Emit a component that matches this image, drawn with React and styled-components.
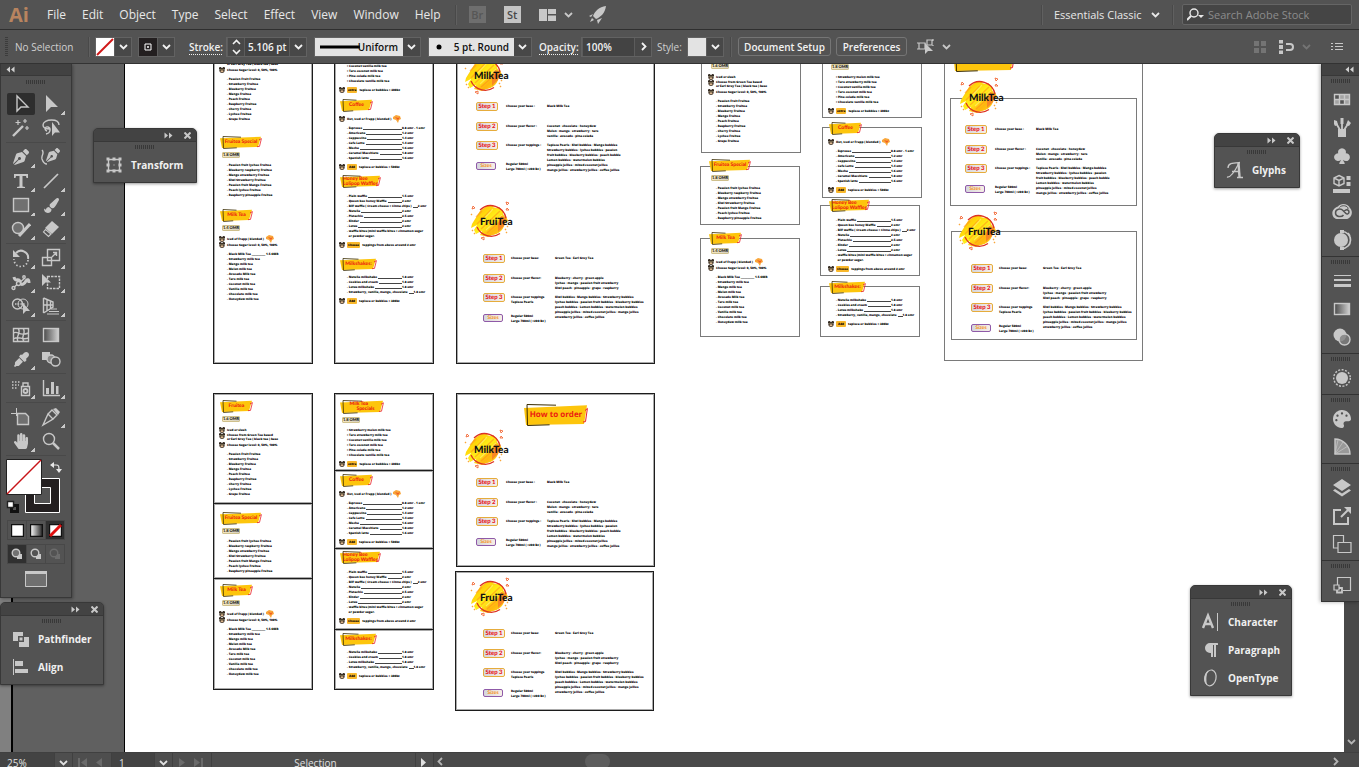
import React from "react";
import styled, { createGlobalStyle } from "styled-components";
import { FaHandPaper, FaPalette, FaPenNib, FaEyeDropper, FaPaintBrush, FaParagraph } from "react-icons/fa";
import { BsSuitClubFill } from "react-icons/bs";

const GlobalStyle = createGlobalStyle`
    * {
        box-sizing: border-box;
    }
    body {
        margin: 0;
        background: #535353;
        color: #e8e8e8;
        font-family: "Open Sans", "Noto Sans", sans-serif;
        font-size: 12px;
    }
    button, input, select {
        font: inherit;
        color: inherit;
        margin: 0;
        padding: 0;
        border: none;
        background: none;
        outline: none;
    }
    select {
        appearance: none;
    }
`;

/* ---------- shell ---------- */

const Shell = styled.div`
    height: 100vh;
    display: grid;
    grid-template-rows: 30px 34px minmax(0, 1fr) 15px;
    overflow: hidden;
`;

const MenuBar = styled.header`
    display: flex;
    align-items: center;
    border-bottom: 1px solid #2f2f2f;
    padding: 0 7px 0 9px;
`;

const AppMark = styled.div`
    width: 30px;
    font-size: 20px;
    line-height: 24px;
    font-weight: 700;
    color: #b8845f;
`;

const Menus = styled.nav`
    display: flex;
    gap: 16px;
    padding: 0 14px 0 8px;
`;

const MenuItem = styled.button`
    line-height: 20px;
`;

const Divider = styled.div`
    width: 2px;
    height: 20px;
    background: #494949;
    border-right: 1px solid #606060;
`;

const MenuTools = styled.div`
    display: flex;
    align-items: center;
    gap: 16px;
    padding-left: 12px;
    margin-right: auto;
`;

const AppTile = styled.button`
    width: 17px;
    height: 17px;
    line-height: 17px;
    font-size: 11px;
    font-weight: 600;
    text-align: center;
    background: ${props => props.$dim ? "#6e6e6e" : "#c4c4c4"};
    color: ${props => props.$dim ? "#565656" : "#4a4a4a"};
    margin-right: 2px;
`;

const ToolButton = styled.button`
    display: flex;
    align-items: center;
    gap: 8px;
    margin-right: ${props => props.$end || 0}px;
    color: #c8c8c8;
`;

const Workspace = styled.label`
    display: grid;
    align-items: center;
    width: 106px;
    margin: 0 12px 0 11px;
    font-size: 11px;

    select {
        grid-area: 1 / 1;
        width: 100%;
    }
    svg {
        grid-area: 1 / 1;
        justify-self: end;
        pointer-events: none;
    }
`;

const SearchBox = styled.label`
    display: flex;
    align-items: center;
    gap: 4px;
    width: 170px;
    height: 21px;
    margin-left: 8px;
    padding-left: 4px;
    border: 1px solid #656565;
    border-radius: 2px;
    background: #454545;
    font-size: 11px;

    input {
        width: 130px;
    }
    input::placeholder {
        color: #8c8c8c;
        opacity: 1;
    }
`;

const ControlBar = styled.div`
    display: flex;
    align-items: center;
    border-bottom: 1px solid #333;
    padding: 0 16px 0 5px;
    font-size: 10px;
    font-weight: 600;
`;

const SideGrip = styled.div`
    width: 3px;
    height: 19px;
    background: repeating-linear-gradient(#3c3c3c 0 1px, #535353 1px 2px);
`;

const Caption = styled.span`
    width: ${props => props.$w}px;
    white-space: nowrap;
    font-weight: ${props => props.$bright ? 600 : 400};
    color: ${props => props.$bright ? "#f0f0f0" : "#d0d0d0"};

    u {
        text-decoration: underline dotted;
        text-underline-offset: 3px;
    }
`;

const Field = styled.div`
    display: flex;
    align-items: center;
    height: 20px;
    margin-right: ${props => props.$gap || 7}px;
    border: 1px solid #626262;
    background: #484848;
    color: #f2f2f2;
`;

const Swatch = styled.button`
    display: block;
    width: 18px;
    height: 18px;
    background: ${props => props.$fill};

    svg {
        display: block;
    }
`;

const ChevronButton = styled.button`
    display: flex;
    justify-content: center;
    align-items: center;
    width: 17px;
    height: 18px;
    border-left: 1px solid #5c5c5c;
`;

const NumberInput = styled.input`
    width: ${props => props.$w}px;
    height: 18px;
    padding-left: 3px;
    border-left: 1px solid #5c5c5c;
    background: #434343;
`;

const Profile = styled.label`
    display: grid;
    align-items: center;
    width: ${props => props.$w}px;
    height: 20px;
    margin-right: 7px;
    border: 1px solid #626262;
    background: linear-gradient(90deg, #e3e3e3 calc(100% - 17px), #484848 0);
    color: #111;

    > * {
        grid-area: 1 / 1;
    }
    select {
        width: 100%;
        padding-right: 22px;
        text-align: right;
        text-align-last: right;
    }
    svg {
        pointer-events: none;
    }
    svg:last-child {
        justify-self: end;
        margin-right: 4px;
        color: #f2f2f2;
    }
`;

const BarButton = styled.button`
    height: 19px;
    width: ${props => props.$w}px;
    margin-right: 5px;
    border: 1px solid #757575;
    border-radius: 3px;
    color: #f2f2f2;
    white-space: nowrap;
`;

const BarRight = styled.div`
    display: flex;
    align-items: center;
    margin-left: auto;
    gap: 12px;
    color: #c8c8c8;
`;

/* docks share the canvas cell and sit on top of it */
const Stage = styled.main`
    display: grid;
    position: relative;
    grid-template: minmax(0, 1fr) / minmax(0, 1fr);
    overflow: hidden;
    > * {
        grid-area: 1 / 1;
    }
`;

const Canvas = styled.div`
    position: relative;
    overflow: hidden;
    background: linear-gradient(90deg, #808080 11px, #000 11px 13px, #606060 13px 124px, #000 124px 125px, #fff 125px);
    text-rendering: geometricPrecision;
    color: #000;
`;

const ScrollTrack = styled.div`
    justify-self: end;
    display: flex;
    align-items: flex-end;
    justify-content: center;
    width: 15px;
    padding-bottom: 6px;
    background: #484848;
    color: #b4b4b4;
    z-index: 1;
`;

const StatusBar = styled.footer`
    display: flex;
    align-items: flex-start;
    height: 15px;
    overflow: hidden;
    background: #4a4a4a;
    border-top: 1px solid #404040;
    font-size: 10px;
    color: #e0e0e0;
`;

const StatusCell = styled.div`
    display: flex;
    flex: none;
    align-items: center;
    justify-content: ${props => props.$center ? "center" : "flex-start"};
    gap: 8px;
    width: ${props => props.$w}px;
    height: 19px;
    padding-left: 4px;
    border-right: 1px solid #404040;
    color: ${props => props.$dim ? "#6a6a6a" : "#e0e0e0"};
    background: ${props => props.$sunk ? "#434343" : "#4e4e4e"};

    input {
        width: 100%;
        padding-left: 3px;
    }
`;

const HScroll = styled.div`
    flex: 1;
    display: flex;
    align-items: center;
    justify-content: space-between;
    height: 17px;
    padding: 0 19px 0 2px;
    color: #b4b4b4;
`;

const Thumb = styled.div`
    width: 25px;
    height: 15px;
    border-radius: 8px;
    background: #5d5d5d;
    margin-right: auto;
    margin-left: 140px;
`;

/* ---------- tool dock ---------- */

const ToolDock = styled.aside`
    align-self: start;
    justify-self: start;
    width: 72px;
    padding-bottom: 8px;
    border: solid #383838;
    border-width: 0 1px 1px 1px;
    background: #535353;
    box-shadow: 1px 1px 3px #0005;
    z-index: 1;
`;

const DockHead = styled.div`
    display: flex;
    align-items: center;
    justify-content: ${props => props.$end ? "flex-end" : "flex-start"};
    height: 12px;
    padding: 0 5px;
    border-bottom: 1px solid #383838;
    background: #424242;
    color: #d0d0d0;
`;

const Grip = styled.div`
    width: 20px;
    height: 4px;
    margin: ${props => props.$pad || "3px auto"};
    background: repeating-linear-gradient(90deg, #383838 0 1px, #535353 1px 2px);
`;

const ToolGroup = styled.div`
    display: grid;
    grid-template-columns: 30px 30px;
    grid-auto-rows: 24px;
    margin: 0 5px;
    padding: 2px 0;
    border-bottom: 1px solid #494949;
`;

const Tool = styled.button`
    display: flex;
    justify-content: center;
    align-items: center;
    position: relative;
    width: 28px;
    height: 22px;
    margin: 1px;
    border-radius: 2px;
    color: #c8c8c8;
    background: ${props => props.$active ? "#2e2e2e" : "none"};

    &::after {
        content: "";
        display: ${props => props.$more ? "block" : "none"};
        position: absolute;
        right: 0;
        bottom: 0;
        width: 4px;
        height: 4px;
        background: linear-gradient(135deg, transparent 50%, #c8c8c8 50%);
    }
`;

const ModeRow = styled.div`
    display: flex;
    width: 58px;
    height: 20px;
    margin: ${props => props.$top}px 0 0 6px;
    border: ${props => props.$bare ? "none" : "1px solid #484848"};
`;

const Mode = styled.button`
    flex: 1;
    display: flex;
    justify-content: center;
    align-items: center;
    border-right: 1px solid #484848;
    background: ${props => props.$active ? "#303030" : "none"};
    color: ${props => props.$dim ? "#6c6c6c" : "#c8c8c8"};

    &:last-child {
        border-right: none;
    }
`;

const PaintBox = styled.div`
    margin: 3px 0 0 5px;
    height: 56px;
`;

/* ---------- panel dock and floating panels ---------- */

const PanelDock = styled.aside`
    align-self: start;
    justify-self: end;
    width: 38px;
    border-left: 1px solid #333;
    background: #535353;
    box-shadow: -1px 0 4px #0005;
    z-index: 2;
`;

const PanelGroup = styled.div`
    display: flex;
    flex-direction: column;
    padding: 0 0 2px;
    border-bottom: 1px solid #333;
`;

const PanelIcon = styled.button`
    display: flex;
    align-items: center;
    justify-content: center;
    height: 28px;
    padding-left: 2px;
    color: #c8c8c8;
`;

const Floating = styled.section`
    position: absolute;
    top: ${props => props.$top}px;
    ${props => props.$left !== undefined ? `left: ${props.$left}px` : `right: ${props.$right}px`};
    width: ${props => props.$w}px;
    padding-bottom: 3px;
    border: 1px solid #383838;
    border-radius: 5px 5px 0 0;
    background: #535353;
    box-shadow: 0 1px 3px #0006;
    overflow: hidden;
    z-index: 3;
`;

const FloatHead = styled.div`
    display: flex;
    justify-content: flex-end;
    align-items: center;
    gap: 11px;
    height: 13px;
    padding-right: 5px;
    border-bottom: 1px solid #383838;
    background: #434343;
    color: #d0d0d0;
`;

const FloatButton = styled.button`
    display: flex;
    color: #c8c8c8;
`;

const FloatRow = styled.button`
    display: flex;
    align-items: center;
    width: 100%;
    height: 28px;
    padding-left: 10px;
    gap: 7px;
    font-size: 10px;
    font-weight: 700;
    color: #f0f0f0;

    svg {
        color: #c8c8c8;
    }
`;

/* ---------- artwork ---------- */

const Frame = styled.div`
    position: absolute;
    left: ${props => props.$x}px;
    top: ${props => props.$y}px;
    width: ${props => props.$w}px;
    height: ${props => props.$h}px;
    border: 1px solid ${props => props.$thin ? "#7a7a7a" : "#1c1c1c"};
    box-shadow: ${props => props.$thin ? "none" : "inset 0 0 0 1px #0005"};
`;

const Placed = styled.div`
    position: absolute;
    left: ${props => props.$x}px;
    top: ${props => props.$y}px;
    font-size: 3px;
    font-weight: 800;
    line-height: 5px;
    white-space: nowrap;
`;

const BadgeBox = styled.h3`
    display: grid;
    place-items: center;
    width: ${props => props.$w}px;
    margin: 0 0 0 1px;
    font-family: ${props => props.$size ? "Open Sans" : "Lato"}, sans-serif;
    font-size: ${props => props.$size || 5}px;
    line-height: ${props => props.$size || 5}px;
    font-weight: ${props => props.$size ? 700 : 900};
    color: #ec1c10;

    svg, span {
        grid-area: 1 / 1;
    }
    span {
        white-space: pre;
    }
`;

const Price = styled.div`
    width: 18px;
    height: 6px;
    margin: 3px 0 5px 3px;
    border: 1px solid #cfc08c;
    border-radius: 1px;
    background: linear-gradient(90deg, #f6e8bd, #d3cfc4);
    font-family: Lato, sans-serif;
    font-size: 4px;
    font-weight: 700;
    line-height: 4px;
    text-align: center;
`;

const NoteLine = styled.div`
    display: flex;
    align-items: ${props => props.$top ? "flex-start" : "center"};
    gap: 2px;
    height: ${props => props.$top ? 9 : 6}px;
    line-height: ${props => props.$top ? 4 : 6}px;

    svg {
        flex: none;
    }
`;

const Notes = styled.div`
    margin-bottom: 4px;
`;

const ExtraTag = styled.span`
    padding: 0 1px;
    min-width: 10px;
    height: 6px;
    border-radius: 1px;
    background: #f9b82b;
    text-align: center;
`;

const Items = styled.ul`
    list-style: none;
    margin: 0 0 3px;
    padding: 0 0 0 8px;

    li {
        height: 5px;
    }
`;

const PriceRow = styled.li`
    display: flex;

    span:first-child {
        display: flex;
        flex: none;
        min-width: 55px;
        gap: 1px;
    }
    i {
        flex: 1;
        min-width: 5px;
        height: 4px;
        border-bottom: 1px solid #444;
    }
`;

const Gap = styled.div`
    height: ${props => props.$h || 0}px;
    width: ${props => props.$w || 0}px;
`;

const Guide = styled.div`
    display: grid;
    grid-template-columns: ${props => props.$cols};
    grid-template-rows: 20px 19px 21px 10px;
`;

const StepTag = styled.div`
    width: ${props => props.$sizes ? 20 : 22}px;
    height: ${props => props.$sizes ? 8 : 9}px;
    border: 1px solid ${props => props.$sizes ? "#8f5aa8" : "#e6ac3c"};
    border-radius: 2px;
    background: linear-gradient(90deg, #d5d5dc, #f6efe6);
    font-family: Lato, sans-serif;
    font-size: ${props => props.$sizes ? 5 : 6}px;
    line-height: ${props => props.$sizes ? 6 : 7}px;
    text-align: center;
    font-weight: 900;
    color: ${props => props.$sizes ? "#f7941d" : "#e8141c"};
`;

const StepText = styled.div`
    white-space: pre;
    padding-top: ${props => props.$high ? 0 : 2}px;
    height: 0;
`;

/* ---------- small drawings ---------- */

const Svg = ({ w = 20, h = w, box, children, ...rest }) => (
    <svg width={w} height={h} viewBox={box || `0 0 ${w} ${h}`} fill="none" stroke="currentColor" strokeWidth="1.4" aria-hidden="true" {...rest}>
        {children}
    </svg>
);

const Chevron = ({ right, left }) => (
    <Svg w={9} h={9} strokeWidth="1.8">
        <path d={right ? "M3 1l3.500 3.500L3 8" : left ? "M6 1L2.500 4.500L6 8" : "M1 3l3.500 3.500L8 3"} />
    </Svg>
);

const DoubleArrow = ({ back }) => (
    <Svg w={9} h={7} fill="currentColor" stroke="none">
        <path d={back ? "M4 .5v6L.5 3.500zM8.500 .5v6L5 3.500z" : "M.5 .5v6L4 3.500zM5 .5v6L8.500 3.500z"} />
    </Svg>
);

const Bear = () => (
    <Svg w={6} h={6} stroke="none">
        <circle cx="1.200" cy="1.300" r="1.200" fill="#2b2118" />
        <circle cx="4.800" cy="1.300" r="1.200" fill="#2b2118" />
        <circle cx="3" cy="3.300" r="2.600" fill="#40342a" />
        <ellipse cx="3" cy="4.300" rx="1.500" ry="1" fill="#d8b48c" />
        <path d="M1.500 2.500h1M3.500 2.500h1" stroke="#e8e0a0" strokeWidth=".6" />
    </Svg>
);

const Splash = () => (
    <Svg w={8} h={8} stroke="none">
        <path d="M0 2L3 0l4 1 1 3-2 1-1 3-2-3-3-1z" fill="#f9a63a" />
        <path d="M2 2l3 1 2-1-2 3z" fill="#f15a24" />
    </Svg>
);

const Badge = ({ w, h = 13, size, children }) => (
    <BadgeBox $w={w} $size={size}>
        <Svg w={w} h={h} strokeWidth={h > 14 ? 1 : 0.8}>
            <path d={`M0 ${h * 0.18}L${w - 1} ${h * 0.06}L${w - 4} ${h - 2}L2 ${h - 1}z`} fill="#fdc50c" stroke="none" />
            <path d={`M${w * 0.5} 1.200L3 .5L3.500 ${h - 0.5}L${w * 0.4} ${h - 1.200}`} stroke="#3a2c00" />
            <path d={`M${w - 3} ${h * 0.3}L${w - 0.6} ${h * 0.2}L${w - 2.500} ${h * 0.8}L${w - 5} ${h * 0.82}`} stroke="#e8202a" />
        </Svg>
        <span>{children}</span>
    </BadgeBox>
);

const Logo = ({ name }) => (
    <Svg w={50} h={44} stroke="none">
        <defs>
            <linearGradient id={`juice-${name}`} x1="0" y1="0" x2="1" y2="1">
                <stop offset="0" stopColor="#ffa21a" />
                <stop offset=".3" stopColor="#ffd60a" />
                <stop offset=".5" stopColor="#fff01a" />
                <stop offset=".7" stopColor="#ffb60f" />
                <stop offset="1" stopColor="#ffe01a" />
            </linearGradient>
        </defs>
        <circle cx="22" cy="22" r="14" fill={`url(#juice-${name})`} />
        <path d="M3 25L11 12l8-6 6 1-8 8 13-7 5 5-7 7 9-3 2 5-8 6-3 6-9 4-8-2 3-5-7 4-2-4 3-5-6 3z" fill={`url(#juice-${name})`} />
        <path d="M8 25L22 11M12 30L31 12M18 34L35 19M7 18l6-6" stroke="#ff8c1a" strokeWidth="1.500" opacity=".55" />
        <path d="M12 23L24 10M17 31L33 16" stroke="#fff36b" strokeWidth="1.200" opacity=".7" />
        <path d="M32 17l5 2-2 8-6 6 0-8z" fill="#f7762a" opacity=".75" />
        <path d="M11 11a15.500 15.500 0 0 1 26 8M8 28a15.500 15.500 0 0 0 23 6.500" stroke="#dd3324" strokeWidth="1.300" />
        <path d="M37 3l3 1-2 2zM4 7l2 2-3 1zM12 39l3-1 0 3zM38 9l2 2-3 0z" stroke="#f15a24" strokeWidth=".8" />
        <path d="M36 30l1 1M38 27l1 1M37 33l1 1M3 31l1 1M5 34l1 1M2 15l1 1" stroke="#f9a63a" />
        <text x="11" y="26" fontFamily="Lato, sans-serif" fontSize="10" fontWeight="900" fill="#111">{name}</text>
    </Svg>
);

/* ---------- menu artwork ---------- */

const Bullets = ({ items, mark = "." }) => (
    <Items>
        {items.map(item => <li key={item}>{mark} {item}</li>)}
    </Items>
);

const Priced = ({ rows, children }) => (
    <Items>
        {rows.map(([name, price]) => (
            <PriceRow key={name}><span>. {name}<i /></span><span>{price}</span></PriceRow>
        ))}
        {children}
    </Items>
);

const Note = ({ children, top }) => (
    <NoteLine $top={top}><Bear />{children}</NoteLine>
);

const FruiteaSection = ({ x, y }) => (
    <Placed $x={x} $y={y}>
        <Badge w={33}>Fruitea</Badge>
        <Price>1.6 OMR</Price>
        <Notes>
            <Note>Iced or slush</Note>
            <Note top><span>Choose from Green Tea based<br />or Earl Grey Tea ( black tea ) base</span></Note>
            <Note>Choose Sugar level: 0, 50%, 100%</Note>
        </Notes>
        <Bullets items={["Passion Fruit Fruitea", "Strawberry Fruitea", "Blueberry Fruitea", "Mango Fruitea", "Peach Fruitea", "Raspberry Fruitea", "Cherry Fruitea", "Lychee Fruitea", "Grape Fruitea"]} />
    </Placed>
);

const SpecialSection = ({ x, y }) => (
    <Placed $x={x} $y={y}>
        <Badge w={42}>Fruitea Special</Badge>
        <Price>1.8 OMR</Price>
        <Bullets items={["Passion fruit lychee Fruitea", "Blueberry raspberry Fruitea", "Mango strawberry Fruitea", "Kiwi Strawberry Fruitea", "Passion fruit Mango Fruitea", "Peach lychee Fruitea", "Raspberry pineapple Fruitea"]} />
    </Placed>
);

const MilkTeaSection = ({ x, y }) => (
    <Placed $x={x} $y={y}>
        <Badge w={33}>Milk Tea</Badge>
        <Price>1.4 OMR</Price>
        <Notes>
            <Note>Iced of Frapp ( blended )<Splash /></Note>
            <Note>Choose Sugar level: 0, 50%, 100%</Note>
        </Notes>
        <Bullets items={["Black Milk Tea _________ 1.5 OMR", "Strawberry milk tea", "Mango milk tea", "Melon milk tea", "Avocado Milk tea", "Taro milk tea", "Coconut milk tea", "Vanilla milk tea", "Chocolate milk tea", "Honeydew milk tea"]} />
    </Placed>
);

const SpecialsSection = ({ x, y }) => (
    <Placed $x={x} $y={y}>
        <Badge w={44} h={14}>{"Milk Tea\n      Specials"}</Badge>
        <Price>1.8 OMR</Price>
        <Bullets mark="•" items={["Strawberry melon milk tea", "Taro strawberry milk tea", "Coconut vanilla milk tea", "Taro coconut milk tea", "Pina colada milk tea", "Chocolate vanilla milk tea"]} />
        <Note><ExtraTag>extra</ExtraTag>tapioca or bubbles + 300bz</Note>
    </Placed>
);

const CoffeeSection = ({ x, y }) => (
    <Placed $x={x} $y={y}>
        <Badge w={33}>Coffee</Badge>
        <Gap $h={4} />
        <Notes>
            <Note>Hot, Iced or Frapp ( blended )<Splash /></Note>
        </Notes>
        <Priced rows={[["Espresso", "0.8 omr - 1 omr"], ["Americano", "1.2 omr"], ["Cappuccino", "1.4 omr"], ["Cafe Latte", "1.4 omr"], ["Mocha", "1.6 omr"], ["Caramel Macchiato", "1.8 omr"], ["Spanish latte", "1.6 omr"]]} />
        <Note><ExtraTag>Add</ExtraTag>tapioca or bubbles + 500bz</Note>
    </Placed>
);

const WaffleSection = ({ x, y }) => (
    <Placed $x={x} $y={y}>
        <Badge w={41}>{"Honey Bee\nLolipop Waffles"}</Badge>
        <Gap $h={6} />
        <Priced rows={[["Plain waffle", "1.5 omr"], ["Queen bee honey Waffle", "2 omr"], ["Bilf waffle ( Cream cheese + Cinna chips )", "2 omr"], ["Nutella", "2 omr"], ["Pistachio", "2.5 omr"], ["Kinder", "2 omr"], ["Lotus", "2 omr"]]}>
            <li>. waffle bites (mini waffle bites + cinnamon sugar</li>
            <li>&nbsp;&nbsp;or powder sugar.</li>
        </Priced>
        <Note><ExtraTag>Choose</ExtraTag>toppings from above around 2 omr</Note>
    </Placed>
);

const ShakeSection = ({ x, y }) => (
    <Placed $x={x} $y={y}>
        <Badge w={37}>Milkshakes:</Badge>
        <Gap $h={4} />
        <Priced rows={[["Nutella milkshake", "1.8 omr"], ["Cookies and cream", "1.8 omr"], ["Lotus milkshake", "1.8 omr"], ["Strawberry, vanilla, mango, chocolate", "1.8 omr"]]} />
        <Note><ExtraTag>Add</ExtraTag>tapioca or bubbles + 300bz</Note>
    </Placed>
);

const MILK_STEPS = [
    ["Step 1", "Choose your base :", "Black Milk Tea"],
    ["Step 2", "Choose your flavor :", "Coconut · chocolate · honeydew\nMelon · mango · strawberry · taro\nvanilla · avocado · pina colada"],
    ["Step 3", "Choose your toppings :", "Tapioca Pearls · Kiwi bubbles · Mango bubbles\nStrawberry bubbles · lychee bubbles · passion\nfruit bubbles · blueberry bubbles · peach bubble\nLemon bubbles · watermelon bubbles\npineapple jellies · mixed coconut jellies\nmango jellies · strawberry jellies · coffee jellies"],
];

const FRUIT_STEPS = [
    ["Step 1", "Choose your base:", "Green Tea · Earl Grey Tea"],
    ["Step 2", "Choose your flavor:", "Blueberry · cherry · green apple\nlychee · mango · passion fruit strawberry\nKiwi peach · pineapple · grape · raspberry"],
    ["Step 3", "Choose your toppings\nTapioca Pearls", "Kiwi bubbles · Mango bubbles · Strawberry bubbles\nlychee bubbles · passion fruit bubbles · blueberry bubbles\npeach bubbles · Lemon bubbles · watermelon bubbles\npineapple jellies · mixed coconut jellies · mango jellies\nstrawberry jellies · coffee jellies"],
];

const OrderGuide = ({ x, y, fruit }) => (
    <Placed $x={x} $y={y}>
        <Guide $cols={fruit ? "28px 44px auto" : "30px 41px auto"}>
            {(fruit ? FRUIT_STEPS : MILK_STEPS).map(([step, label, value]) => (
                <React.Fragment key={step}>
                    <StepTag>{step}</StepTag>
                    <StepText>{label}</StepText>
                    <StepText>{value}</StepText>
                </React.Fragment>
            ))}
            <StepTag $sizes>Sizes</StepTag>
            <StepText $high>{"Regular 500ml\nLarge 700ml ( +200 Bz )"}</StepText>
        </Guide>
    </Placed>
);

const Artwork = () => (
    <>
        <Frame $x={213} $y={-20} $w={100} $h={320} />
        <FruiteaSection x={219} y={-39} />
        <SpecialSection x={219} y={72} />
        <MilkTeaSection x={219} y={145} />

        <Frame $x={334} $y={-20} $w={100} $h={320} />
        <SpecialsSection x={339} y={-38} />
        <CoffeeSection x={339} y={35} />
        <WaffleSection x={339} y={111} />
        <ShakeSection x={339} y={194} />

        <Frame $x={456} $y={-20} $w={199} $h={320} />
        <Placed $x={463} $y={-11}><Logo name="MilkTea" /></Placed>
        <OrderGuide x={476} y={38} />
        <Placed $x={469} $y={135}><Logo name="FruiTea" /></Placed>
        <OrderGuide x={483} y={190} fruit />

        <Frame $thin $x={701} $y={-20} $w={100} $h={109} />
        <FruiteaSection x={708} y={-17} />
        <Frame $thin $x={700} $y={102} $w={100} $h={59} />
        <SpecialSection x={708} y={95} />
        <Frame $thin $x={700} $y={174} $w={100} $h={99} />
        <MilkTeaSection x={708} y={168} />

        <Frame $thin $x={822} $y={-20} $w={100} $h={74} />
        <SpecialsSection x={828} y={-17} />
        <Frame $thin $x={822} $y={63} $w={100} $h={71} />
        <CoffeeSection x={828} y={58} />
        <Frame $thin $x={820} $y={141} $w={100} $h={71} />
        <WaffleSection x={828} y={135} />
        <Frame $thin $x={820} $y={222} $w={100} $h={51} />
        <ShakeSection x={828} y={217} />

        <Frame $thin $x={944} $y={-20} $w={199} $h={317} />
        <Placed $x={952} $y={-14}><Badge w={62} h={22} size={8}>How to order</Badge></Placed>
        <Frame $thin $x={950} $y={34} $w={187} $h={108} />
        <Placed $x={958} $y={11}><Logo name="MilkTea" /></Placed>
        <OrderGuide x={965} y={61} />
        <Frame $thin $x={951} $y={167} $w={186} $h={109} />
        <Placed $x={957} $y={145}><Logo name="FruiTea" /></Placed>
        <OrderGuide x={971} y={200} fruit />

        <Frame $x={213} $y={329} $w={100} $h={111} />
        <FruiteaSection x={219} y={336} />
        <Frame $x={213} $y={439} $w={100} $h={76} />
        <SpecialSection x={219} y={448} />
        <Frame $x={213} $y={514} $w={100} $h={112} />
        <MilkTeaSection x={219} y={520} />

        <Frame $x={334} $y={329} $w={100} $h={78} />
        <SpecialsSection x={339} y={336} />
        <Frame $x={334} $y={406} $w={100} $h={79} />
        <CoffeeSection x={339} y={410} />
        <Frame $x={334} $y={484} $w={100} $h={82} />
        <WaffleSection x={339} y={487} />
        <Frame $x={334} $y={565} $w={100} $h={61} />
        <ShakeSection x={339} y={569} />

        <Frame $x={456} $y={329} $w={199} $h={174} />
        <Placed $x={523} $y={340}><Badge w={64} h={22} size={8}>How to order</Badge></Placed>
        <Placed $x={463} $y={363}><Logo name="MilkTea" /></Placed>
        <OrderGuide x={476} y={414} />
        <Frame $x={455} $y={507} $w={199} $h={140} />
        <Placed $x={469} $y={511}><Logo name="FruiTea" /></Placed>
        <OrderGuide x={483} y={565} fruit />
    </>
);

/* ---------- tool glyphs ---------- */

const solid = { fill: "currentColor", stroke: "none" };

const TOOLS = [
    [
        ["Selection", <Svg><path d="M6 2v15l4-4h7z" /></Svg>, { active: true }],
        ["Direct Selection", <Svg {...solid}><path d="M5 1v17l5-5h7z" /></Svg>, { more: true }],
        ["Magic Wand", <Svg><path d="M2 18L12 8" strokeWidth="2.400" /><path d="M7 2v5M4.500 4.500h5M14 1v4M12 3h4M16 8v4M14 10h4" strokeWidth="1.200" /></Svg>, {}],
        ["Lasso", <Svg><path d="M9 11c-4 0-7-1-7-4S6 2 10.500 2 18 4 18 7M6 13c-3-1-2-5 1-4s3 6-2 7" /><path d="M11 4v14l3-3.500h5z" {...solid} /></Svg>, {}],
    ],
    [
        ["Pen", <FaPenNib size={16} />, { more: true }],
        ["Curvature", <Svg><path d="M1 3c3 3-1 5 0 9 1 3 3 5 5 5" /><g {...solid} transform="translate(5 1)"><FaPenNib size={14} /></g></Svg>, {}],
        ["Type", <Svg {...solid}><path d="M3 3h14v4h-1.500L15 5h-3.500v10.500L14 16v1H6v-1l2.500-.5V5H5L4.500 7H3z" /></Svg>, { more: true }],
        ["Line Segment", <Svg><path d="M3 17L17 3" strokeWidth="1.700" /></Svg>, { more: true }],
        ["Rectangle", <Svg><rect x="2.500" y="3.500" width="15" height="13" fill="#707070" /></Svg>, { more: true }],
        ["Paintbrush", <FaPaintBrush size={15} />, { more: true }],
        ["Shaper", <Svg><circle cx="7" cy="9" r="5.500" fill="#707070" /><path d="M8 17L19 5" strokeWidth="3" /></Svg>, { more: true }],
        ["Eraser", <Svg><path d="M11 2l7 6-7 7-7-6z" {...solid} /><path d="M4.500 10.500L2.500 13l5 4.500 2.500-2.500z" strokeWidth="1.200" /></Svg>, { more: true }],
    ],
    [
        ["Rotate", <Svg><path d="M5 5a7 7 0 0 1 12 6" strokeWidth="2" /><path d="M17 12a7 7 0 0 1-14-1" strokeDasharray="1.500 2" strokeWidth="1.700" /><path d="M2 2v7h7z" {...solid} /></Svg>, { more: true }],
        ["Scale", <Svg><path d="M6.500 1.500h12v11h-12zM1.500 9.500h9v8h-9z" /><path d="M11 9l4-4M12 4.500h3.500V8" /></Svg>, { more: true }],
        ["Width", <Svg><path d="M3 5c1 6 5 0 6 5s5 1 6-1 3-2 3 2" strokeWidth="3" /><path d="M2 16L14 6" /><circle cx="2.500" cy="16" r="1.500" fill="#535353" /><circle cx="7.500" cy="11.500" r="2" fill="#535353" /><circle cx="13" cy="5" r="1.200" fill="#535353" /></Svg>, { more: true }],
        ["Free Transform", <Svg><path d="M6.500 4.500h12v12h-12z" strokeDasharray="2.500 1" /><path d="M1 2v12l3.500-3.500H10z" {...solid} /></Svg>, { more: true }],
        ["Shape Builder", <Svg><circle cx="6.500" cy="8" r="5" /><circle cx="12" cy="8" r="5" strokeWidth="1" /><path d="M4 8h10" strokeDasharray="1.500 1.200" /><path d="M12 7v11l3-3h4z" {...solid} /></Svg>, { more: true }],
        ["Perspective Grid", <Svg><path d="M2.500 2v15M6 3v12M9.500 4.500v8M2.500 2L12 6v5L2.500 17M2.500 9H12" /><path d="M10 13h6M8 15.500h10M6 18h12" strokeWidth="1" /></Svg>, { more: true }],
    ],
    [
        ["Mesh", <Svg><path d="M2.500 3.500h15v13h-15zM2.500 8c5-3 5 4 15 0M2.500 14c6-4 8 2 15-1M7 3.500c4 4-3 8 0 13M12 3.500c4 4-3 8 1 13" /></Svg>, {}],
        ["Gradient", <Svg><defs><linearGradient id="toolGrad"><stop stopColor="#4a4a4a" /><stop offset="1" stopColor="#d0d0d0" /></linearGradient></defs><rect x="2.500" y="3.500" width="15" height="13" fill="url(#toolGrad)" /></Svg>, {}],
        ["Eyedropper", <FaEyeDropper size={15} />, { more: true }],
        ["Blend", <Svg><path d="M1 3h8v8H1z" {...solid} /><circle cx="10" cy="10" r="4" fill="#888" /><circle cx="14.500" cy="12.500" r="4.500" fill="#535353" /></Svg>, {}],
    ],
    [
        ["Symbol Sprayer", <Svg><path d="M10.500 8.500h8v9h-8zM12 8V5h5v3" /><circle cx="14.500" cy="13" r="2" strokeWidth="1.800" /><path d="M1 4h9M1 7h7M1 10h5" strokeDasharray="1.500 1.500" strokeWidth="1.700" /></Svg>, { more: true }],
        ["Column Graph", <Svg><path d="M2.500 2v15.500H19" /><path d="M5 10h3v6H5zM10 4h3v12h-3zM15 8h2.500v8H15z" {...solid} /></Svg>, { more: true }],
    ],
    [
        ["Artboard", <Svg><path d="M6.500 6.500h8l3 3v8h-11z" fill="#707070" /><path d="M0 6.500h7M5.500 1v8" strokeWidth="1" /></Svg>, {}],
        ["Slice", <Svg><path d="M2 18l5-11 5 5zM7 7l4-4 5 5-4 4" /><path d="M12 2l3-1 4 4-2 3z" {...solid} /></Svg>, { more: true }],
        ["Hand", <FaHandPaper size={16} />, { more: true }],
        ["Zoom", <Svg><circle cx="8" cy="8" r="5.500" /><path d="M12 12l6 6" strokeWidth="2.500" /></Svg>, {}],
    ],
];

const PANELS = [
    [
        ["Swatches", <Svg><path d="M2.500 4.500h15v10h-15zM2.500 9.500h15M7.500 4.500v10M12.500 4.500v10" /><path d="M8 5h9v4H8zM3 10h4v4H3zM13 10h4v4h-4z" {...solid} opacity=".7" /></Svg>],
        ["Brushes", <Svg><path d="M6 11h8v8H6z" {...solid} /><path d="M8 12L4 5M10 12V3M12 12l4-6" strokeWidth="1.800" /><path d="M2 2l3 1 1 4-3 1-1-2zM8.500 0h3v6h-3zM16 2l3 3-2 3-3-1z" {...solid} /></Svg>],
        ["Symbols", <BsSuitClubFill size={18} />],
        ["3D and Materials", <Svg><path d="M7 1.500l5 2.500v5.500L7 12 2 9.500V4zM2 4l5 2.500L12 4M7 6.500V12" /><path d="M14.500 2h4v4h-4zM14.500 8h4v4h-4zM1 15h17v4H1z" {...solid} /></Svg>],
        ["Libraries", <Svg w={22} h={18}><path d="M7 3.500C9 0 17 0 19 5c4 4 1 11-4 11H7C0 16-1 6 7 3.500z" {...solid} /><path d="M12.500 12c-2 2.500-8 2-8-2s5-5 7.500-2.500l3 3c1 1 3 .5 3-1.500s-2-3-4-1.500l-1.500 1.500" stroke="#535353" strokeWidth="1.500" /><path d="M8.500 4.500c2-3 9-2 8.500 1.500" stroke="#535353" strokeWidth="1" /></Svg>],
        ["Color Themes", <Svg><circle cx="9" cy="10" r="7" {...solid} /><path d="M10 1.500a8.500 8.500 0 0 1 0 17M16 3l2 3M17 15l1-2" strokeWidth="1.700" /><path d="M8 0h4v3H8zM8 17h4v3H8z" {...solid} /></Svg>],
    ],
    [
        ["Stroke", <Svg {...solid}><path d="M2 4h17v1H2zM2 8h17v2H2zM2 13h17v3H2z" /></Svg>],
        ["Gradient", <Svg><defs><linearGradient id="dockGrad"><stop stopColor="#4a4a4a" /><stop offset="1" stopColor="#d0d0d0" /></linearGradient></defs><rect x="2.500" y="4.500" width="15" height="11" fill="url(#dockGrad)" /></Svg>],
        ["Transparency", <Svg><circle cx="8" cy="8" r="6.500" {...solid} /><circle cx="12.500" cy="12.500" r="5.500" fill="#808080cc" /></Svg>],
    ],
    [["Appearance", <Svg><circle cx="10" cy="10" r="6" {...solid} /><circle cx="10" cy="10" r="8.300" strokeDasharray="2 1.500" /></Svg>]],
    [
        ["Color", <FaPalette size={18} />],
        ["Color Guide", <Svg><path d="M3 2v15h15C18 9 11 2 3 2z" fill="#999" /><path d="M3 17L6 3M3 17l8-12M3 17l13-8" strokeWidth=".7" /></Svg>],
    ],
    [
        ["Layers", <Svg {...solid}><path d="M10 1l9 6-9 6-9-6zM3 11l7 4.500L17 11l2 1.500-9 6-9-6z" /></Svg>],
        ["Asset Export", <Svg strokeWidth="2"><path d="M9 4H2v14h14v-7M9 11l8-8" /><path d="M12 1h7v7z" {...solid} /></Svg>],
        ["Artboards", <Svg strokeWidth="1.200"><path d="M6 14H1.500V1.500h10V8M6 8.500h13v10H6z" /></Svg>],
    ],
    [["Links", <Svg strokeWidth="1.200"><path d="M5.500 10V2.500h13v13H11M2 10h5v5H2z" /><path d="M7 13h3v4.500H5V15" strokeWidth="1.800" /></Svg>]],
];

const GlyphA = () => (
    <Svg w={20} h={20} strokeWidth="1.300">
        <path d="M2 17c4 1 8-6 12-14" />
        <path d="M13.500 3l1 14" strokeWidth="2.400" />
        <path d="M7 11.500h8M3 8c0-5 5-5 12-5.500M12 17.500h6" />
    </Svg>
);

const FLOATS = [
    { top: 64, left: 93, w: 104, rows: [["Transform", <Svg><path d="M4.500 4.500h11v11h-11z" /><path d="M2.500 2.500h3v3h-3zM8.500 2.500h3v3h-3zM14.500 2.500h3v3h-3zM2.500 14.500h3v3h-3zM8.500 14.500h3v3h-3zM14.500 14.500h3v3h-3zM2.500 8.500h3v3h-3zM14.500 8.500h3v3h-3zM9.500 9.500h1v1h-1z" {...solid} /></Svg>]] },
    { top: 69, right: 59, w: 86, rows: [["Glyphs", <GlyphA />]] },
    { top: 538, left: 0, w: 104, rows: [
        ["Pathfinder", <Svg><path d="M2 3h10v4H7v5H2zM13 8h5v10H8v-5h5z" {...solid} /><path d="M8.500 8.500h3v3h-3z" {...solid} /></Svg>],
        ["Align", <Svg><path d="M2.500 2v16" strokeWidth="1" /><path d="M4 4h8v5H4zM4 12h13v4H4z" {...solid} /></Svg>],
    ] },
    { top: 521, right: 67, w: 102, rows: [
        ["Character", <Svg><path d="M2 16L7 3.500 12 16M4 12h6" strokeWidth="2.400" /><path d="M16.500 1v18" strokeWidth="1" /></Svg>],
        ["Paragraph", <Svg><g {...solid} transform="translate(2 2)"><FaParagraph size={16} /></g></Svg>],
        ["OpenType", <Svg><ellipse cx="9.500" cy="10" rx="5.500" ry="8" transform="rotate(12 10 10)" strokeWidth="1.200" /><path d="M7 2.500c-5 4-5 12-1 14.500-1-4-1-10 1-14.500" {...solid} /></Svg>],
    ] },
];

const MENUS = ["File", "Edit", "Object", "Type", "Select", "Effect", "View", "Window", "Help"];

const MainMenu = () => (
    <MenuBar>
        <AppMark>Ai</AppMark>
        <Menus>
            {MENUS.map(name => <MenuItem key={name}>{name}</MenuItem>)}
        </Menus>
        <Divider />
        <MenuTools>
            <AppTile $dim>Br</AppTile>
            <AppTile>St</AppTile>
            <ToolButton aria-label="Arrange documents">
                <Svg w={17} h={12} {...solid}><path d="M0 0h8v12H0zM9 0h8v5H9zM9 6.500h8V12H9z" /></Svg>
                <Chevron />
            </ToolButton>
            <ToolButton aria-label="GPU performance">
                <Svg w={18} h={18} {...solid}><path d="M17 0C10 1 6 5 4 10l3 3c5-2 9-6 10-13zM4 8L0 10l2 1zM8 14l1 4 4-6zM3 12l2 2-4 2z" /></Svg>
            </ToolButton>
        </MenuTools>
        <Divider />
        <Workspace>
            <select aria-label="Workspace"><option>Essentials Classic</option></select>
            <Chevron />
        </Workspace>
        <Divider />
        <SearchBox>
            <Svg w={17} h={13}><circle cx="7" cy="5" r="4" /><path d="M4 8l-4 4" strokeWidth="2" /><path d="M11 7h6l-3 3z" {...solid} /></Svg>
            <input placeholder="Search Adobe Stock" aria-label="Search Adobe Stock" />
        </SearchBox>
    </MenuBar>
);

const Controls = () => (
    <ControlBar>
        <SideGrip />
        <Gap $w={7} />
        <Caption $w={73}>No Selection</Caption>
        <Divider />
        <Gap $w={5} />
        <Field $gap={6}>
            <Swatch $fill="#fff" aria-label="Fill"><Svg w={18}><path d="M1 17L17 1" stroke="#d01818" strokeWidth="2" /></Svg></Swatch>
            <ChevronButton aria-label="Fill options"><Chevron /></ChevronButton>
        </Field>
        <Field $gap={14}>
            <Swatch $fill="#231f20" aria-label="Stroke color"><Svg w={18}><path d="M6 6h6v6H6zM8.500 8.500h1v1h-1z" stroke="#fff" strokeWidth="1" /></Svg></Swatch>
            <ChevronButton aria-label="Stroke options"><Chevron /></ChevronButton>
        </Field>
        <Caption $w={37} $bright><u>Stroke:</u></Caption>
        <Field>
            <ChevronButton aria-label="Step"><Svg w={9} h={16} strokeWidth="1.600"><path d="M1 5l3.500-3.500L8 5M1 11l3.500 3.500L8 11" /></Svg></ChevronButton>
            <NumberInput $w={45} defaultValue="5.106 pt" aria-label="Stroke weight" />
            <ChevronButton aria-label="Stroke weight options"><Chevron /></ChevronButton>
        </Field>
        <Profile $w={107}>
            <Svg w={45} h={4}><path d="M5 2h40" stroke="#000" strokeWidth="3" /></Svg>
            <select aria-label="Width profile"><option>Uniform</option></select>
            <Chevron />
        </Profile>
        <Profile $w={104}>
            <Svg w={14} h={6} stroke="none"><circle cx="10" cy="3" r="2.500" fill="#000" /></Svg>
            <select aria-label="Brush"><option>5 pt. Round</option></select>
            <Chevron />
        </Profile>
        <Caption $w={42} $bright><u>Opacity:</u></Caption>
        <Field $gap={5}>
            <NumberInput $w={52} defaultValue="100%" aria-label="Opacity" />
            <ChevronButton aria-label="Opacity options"><Chevron right /></ChevronButton>
        </Field>
        <Caption $w={30}>Style:</Caption>
        <Field $gap={6}>
            <Swatch $fill="#e3e3e3" aria-label="Graphic style" />
            <ChevronButton aria-label="Style options"><Chevron /></ChevronButton>
        </Field>
        <Divider />
        <Gap $w={6} />
        <BarButton $w={93}>Document Setup</BarButton>
        <BarButton $w={71}>Preferences</BarButton>
        <Gap $w={5} />
        <ToolButton aria-label="Select similar">
            <Svg w={17} h={17} strokeWidth="1.200"><path d="M2 5h6v6H2zM10 2h5v5h-5zM0 5h2M0 11h2M16 1v2M16 7v1" /><path d="M8 5v11l3-3h5z" {...solid} /></Svg>
            <Chevron />
        </ToolButton>
        <BarRight>
            <Svg w={14} h={14} {...solid} color="#747474"><path d="M1 1h5v5H1zM8 1h5v5H8zM1 8h5v5H1zM8 8h5v5H8z" /></Svg>
            <ToolButton aria-label="Snap options" $end={8}>
                <Svg w={15} h={14}><path d="M0 0h4v3.500H0zM0 5h4v4H0zM0 10.500h4V14H0z" {...solid} /><path d="M7 4h4c4 0 4 6 0 6H7" strokeWidth="2" /></Svg>
                <Svg w={9} color="#747474"><path d="M1 3l3.500 3.500L8 3" strokeWidth="1.800" /></Svg>
            </ToolButton>
            <Svg w={12} h={9} strokeWidth="1"><path d="M0 1.500h2M4 1.500h8M0 4.500h2M4 4.500h8M0 7.500h2M4 7.500h8" /></Svg>
        </BarRight>
    </ControlBar>
);

const Tools = () => (
    <ToolDock>
        <DockHead><DoubleArrow back /></DockHead>
        <Grip $pad="4px auto 6px 25px" />
        {TOOLS.map((group, i) => (
            <ToolGroup key={i}>
                {group.map(([name, icon, { active, more }]) => (
                    <Tool key={name} aria-label={name} $active={active} $more={more}>{icon}</Tool>
                ))}
            </ToolGroup>
        ))}
        <PaintBox>
            <Svg w={58} h={54}>
                <path d="M19.500 19.500h34v34h-34zM28.500 28.500v16h16v-16z" fill="#231f20" fillRule="evenodd" stroke="#fff" strokeWidth="1" />
                <path d="M.5 .5h35v35h-35z" fill="#fff" stroke="#222" strokeWidth="1" />
                <path d="M1 35L35 1" stroke="#c81418" strokeWidth="1.500" />
                <path d="M46 6h4c3 0 3 1 3 6" strokeWidth="1.200" /><path d="M48 3v6l-4-3zM50 10h6l-3 4z" {...solid} />
                <path d="M5.500 46.500h6v6h-6z" stroke="#111" strokeWidth="3" /><path d="M1.500 42.500h6v6h-6z" fill="#fff" stroke="#222" />
            </Svg>
        </PaintBox>
        <ModeRow $top={5}>
            <Mode aria-label="Color"><Svg w={13}><path d="M.5 .5h12v12H.5z" fill="#fff" stroke="#111" /></Svg></Mode>
            <Mode aria-label="Gradient"><Svg w={13}><defs><linearGradient id="modeGrad"><stop stopColor="#fff" /><stop offset="1" stopColor="#222" /></linearGradient></defs><path d="M.5 .5h12v12H.5z" fill="url(#modeGrad)" stroke="#111" /></Svg></Mode>
            <Mode $active aria-label="None"><Svg w={13}><path d="M.5 .5h12v12H.5z" fill="#fff" stroke="#111" /><path d="M1 12L12 1" stroke="#e01010" strokeWidth="3" /></Svg></Mode>
        </ModeRow>
        <ModeRow $top={4}>
            {["Draw Normal", "Draw Behind", "Draw Inside"].map((name, i) => (
                <Mode key={name} aria-label={name} $active={i === 0} $dim={i === 2}>
                    <Svg w={12}><path d="M6 6h5v5H6z" {...solid} /><circle cx="5" cy="5" r="3.800" fill={i ? "#535353" : "#707070"} /></Svg>
                </Mode>
            ))}
        </ModeRow>
        <ModeRow $top={5} $bare>
            <Mode aria-label="Screen mode"><Svg w={22} h={16}><path d="M.5 .5h21v15H.5z" fill="#707070" strokeWidth="1" /><path d="M0 1.500h22" strokeWidth="3" /></Svg></Mode>
        </ModeRow>
    </ToolDock>
);

const Panels = () => (
    <PanelDock>
        <DockHead $end><DoubleArrow back /></DockHead>
        {PANELS.map((group, i) => (
            <PanelGroup key={i}>
                <Grip $pad="3px auto 3px 9px" />
                {group.map(([name, icon]) => <PanelIcon key={name} aria-label={name}>{icon}</PanelIcon>)}
            </PanelGroup>
        ))}
    </PanelDock>
);

const FloatingPanel = ({ top, left, right, w, rows }) => (
    <Floating $top={top} $left={left} $right={right} $w={w}>
        <FloatHead>
            <FloatButton aria-label="Expand"><DoubleArrow /></FloatButton>
            <FloatButton aria-label="Close"><Svg w={7} strokeWidth="2"><path d="M.5 .5l6 6M6.500 .5l-6 6" /></Svg></FloatButton>
        </FloatHead>
        <Grip $pad="3px auto 2px" />
        {rows.map(([name, icon]) => <FloatRow key={name}>{icon}{name}</FloatRow>)}
    </Floating>
);

const Status = () => (
    <StatusBar>
        <StatusCell $w={55} $sunk><input defaultValue="25%" aria-label="Zoom" /></StatusCell>
        <StatusCell $w={18}><Chevron /></StatusCell>
        <StatusCell $w={39} $dim>
            <Svg w={10} h={9} {...solid}><path d="M1 0h2v9H1zM10 0v9L4 4.500z" /></Svg>
            <Svg w={9} h={9} {...solid}><path d="M7 0v9L1 4.500z" /></Svg>
        </StatusCell>
        <StatusCell $w={43} $sunk><input defaultValue="1" aria-label="Artboard" /></StatusCell>
        <StatusCell $w={18}><Chevron /></StatusCell>
        <StatusCell $w={39} $dim>
            <Svg w={9} h={9} {...solid}><path d="M2 0v9l6-4.500z" /></Svg>
            <Svg w={10} h={9} {...solid}><path d="M7 0h2v9H7zM0 0v9l6-4.500z" /></Svg>
        </StatusCell>
        <StatusCell $w={204} $center>Selection</StatusCell>
        <StatusCell $w={18}><Svg w={7} h={9} {...solid}><path d="M1 0v9l5-4.500z" /></Svg></StatusCell>
        <HScroll>
            <Chevron left />
            <Thumb />
            <Chevron right />
        </HScroll>
    </StatusBar>
);

const App = () => (
    <>
        <GlobalStyle />
        <Shell>
            <MainMenu />
            <Controls />
            <Stage>
                <Canvas><Artwork /></Canvas>
                <ScrollTrack><Chevron /></ScrollTrack>
                <Tools />
                <Panels />
                {FLOATS.map(panel => <FloatingPanel key={panel.rows[0][0]} {...panel} />)}
            </Stage>
            <Status />
        </Shell>
    </>
);

export default App;
